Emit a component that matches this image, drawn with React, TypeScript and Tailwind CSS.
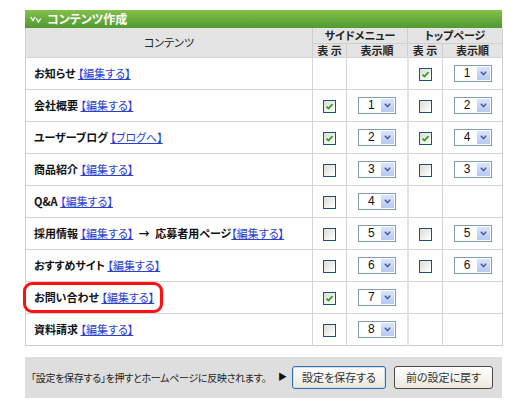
import React from "react";

type Cell = { checked: boolean; order: number } | null;

type Row = {
  label: string;
  link: string;
  extra?: { label: string; link: string };
  side: Cell;
  top: Cell;
};

const rows: Row[] = [
  { label: "お知らせ", link: "【編集する】", side: null, top: { checked: true, order: 1 } },
  { label: "会社概要", link: "【編集する】", side: { checked: true, order: 1 }, top: { checked: false, order: 2 } },
  { label: "ユーザーブログ", link: "【ブログへ】", side: { checked: true, order: 2 }, top: { checked: true, order: 4 } },
  { label: "商品紹介", link: "【編集する】", side: { checked: false, order: 3 }, top: { checked: false, order: 3 } },
  { label: "Q&A", link: "【編集する】", side: { checked: false, order: 4 }, top: null },
  {
    label: "採用情報",
    link: "【編集する】",
    extra: { label: "応募者用ページ", link: "【編集する】" },
    side: { checked: false, order: 5 },
    top: { checked: false, order: 5 },
  },
  { label: "おすすめサイト", link: "【編集する】", side: { checked: false, order: 6 }, top: { checked: false, order: 6 } },
  { label: "お問い合わせ", link: "【編集する】", side: { checked: true, order: 7 }, top: null },
  { label: "資料請求", link: "【編集する】", side: { checked: false, order: 8 }, top: null },
];

function CheckBox({ checked }: { checked: boolean }) {
  return (
    <span className="inline-flex w-[13px] h-[13px] border border-[#1c5180] bg-gradient-to-br from-[#dcdcd7] to-[#ffffff] items-center justify-center align-middle">
      {checked && (
        <svg width="9" height="9" viewBox="0 0 9 9">
          <polyline points="1.5,4.5 3.5,6.5 7.5,2.2" fill="none" stroke="#21a121" strokeWidth="1.7" />
        </svg>
      )}
    </span>
  );
}

function OrderSelect({ value }: { value: number }) {
  return (
    <span className="inline-flex w-[38px] h-[17px] border border-[#7f9db9] bg-white align-middle">
      <span className="flex-1 pl-[3px] text-[12px] leading-[15px] text-[#111] font-['Liberation_Sans',sans-serif]">
        {value}
      </span>
      <span className="w-[13px] my-px mr-px bg-gradient-to-b from-[#d7e3fd] to-[#b5c9f7] flex items-center justify-center">
        <svg width="7" height="5" viewBox="0 0 7 5">
          <polyline points="0.8,0.8 3.5,3.6 6.2,0.8" fill="none" stroke="#4d6185" strokeWidth="1.5" />
        </svg>
      </span>
    </span>
  );
}

function EditLink({ text }: { text: string }) {
  return <span className="text-[#2a3fd0] underline font-normal">{text}</span>;
}

export default function App() {
  return (
    <div className="relative w-[525px] h-[412px] bg-white font-['Noto_Sans_CJK_JP',sans-serif] [font-feature-settings:'palt'] text-[#111]">
      <div className="pt-[10px] pl-[25px] w-[502px]">
        {/* Title bar */}
        <div className="h-[18px] bg-gradient-to-b from-[#84c04a] to-[#4f9a31] flex items-center pl-[5px] gap-[5px]">
          <svg width="12" height="7" viewBox="0 0 12 7">
            <polyline points="0.8,1 3,4.5 5.2,1" fill="none" stroke="#fff" strokeWidth="1.4" />
            <polyline points="6.3,2.5 8.5,6 10.7,2.5" fill="none" stroke="#fff" strokeWidth="1.4" />
          </svg>
          <span className="text-white text-[12px] font-bold leading-none">コンテンツ作成</span>
        </div>

        <table className="w-[477px] border-collapse table-fixed border-l border-r border-b border-[#cfcfcf]">
          <colgroup>
            <col className="w-[287px]" />
            <col className="w-[34px]" />
            <col className="w-[61px]" />
            <col className="w-[35px]" />
            <col className="w-[60px]" />
          </colgroup>
          <thead className="bg-[#e4e4e4] text-[#222] text-[11px]">
            <tr className="h-[15px]">
              <th rowSpan={2} className="font-normal text-center border-r border-[#cfcfcf] leading-none">
                コンテンツ
              </th>
              <th colSpan={2} className="font-bold border-r border-b border-[#cfcfcf] leading-none">
                サイドメニュー
              </th>
              <th colSpan={2} className="font-bold border-b border-[#cfcfcf] leading-none">
                トップページ
              </th>
            </tr>
            <tr className="h-[14px]">
              <th className="font-bold border-r border-[#cfcfcf] leading-none">表 示</th>
              <th className="font-bold border-r border-[#cfcfcf] leading-none">表示順</th>
              <th className="font-bold border-r border-[#cfcfcf] leading-none">表 示</th>
              <th className="font-bold leading-none">表示順</th>
            </tr>
          </thead>
          <tbody className="text-[11px]">
            {rows.map((r) => (
              <tr key={r.label} className="h-[32px] border-t border-[#d4d4d4]">
                <td className="pl-[8px] whitespace-nowrap font-bold border-r border-[#d4d4d4]">
                  {r.label} <EditLink text={r.link} />
                  {r.extra && (
                    <>
                      {" "}
                      <span className="mx-[3px]">→</span> {r.extra.label}
                      <EditLink text={r.extra.link} />
                    </>
                  )}
                </td>
                <td className="text-center border-r border-[#d4d4d4]">
                  {r.side && <CheckBox checked={r.side.checked} />}
                </td>
                <td className="text-center border-r-2 border-[#e2e2e2]">
                  {r.side && <OrderSelect value={r.side.order} />}
                </td>
                <td className="text-center border-r border-[#d4d4d4]">
                  {r.top && <CheckBox checked={r.top.checked} />}
                </td>
                <td className="text-center">{r.top && <OrderSelect value={r.top.order} />}</td>
              </tr>
            ))}
          </tbody>
        </table>

        {/* Footer */}
        <div className="mt-[11px] w-[477px] h-[41px] bg-[#dedede] flex items-center pl-[6px] pr-[9px]">
          <span className="text-[10px] tracking-[-0.3px] text-[#222] flex-1 min-w-0 whitespace-nowrap overflow-hidden">
            「設定を保存する」を押すとホームページに反映されます。
          </span>
          <span className="shrink-0 text-[9px] text-[#111] mr-[5px]">▶</span>
          <button className="shrink-0 w-[94px] h-[23px] rounded-[3px] border border-[#2f6fb0] bg-gradient-to-b from-[#ffffff] to-[#ebe8dc] text-[11px] text-[#333] shadow-[inset_0_0_0_1px_#cfe0f5]">
            設定を保存する
          </button>
          <button className="shrink-0 ml-[8px] w-[99px] h-[23px] rounded-[3px] border border-[#4a4a4a] bg-gradient-to-b from-[#ffffff] to-[#ebe8dc] text-[11px] text-[#333]">
            前の設定に戻す
          </button>
        </div>
      </div>

      {/* Highlight annotation */}
      <div className="absolute left-[23px] top-[282px] w-[140px] h-[31px] border-[3px] border-[#ff1010] rounded-[9px] pointer-events-none" />
    </div>
  );
}
